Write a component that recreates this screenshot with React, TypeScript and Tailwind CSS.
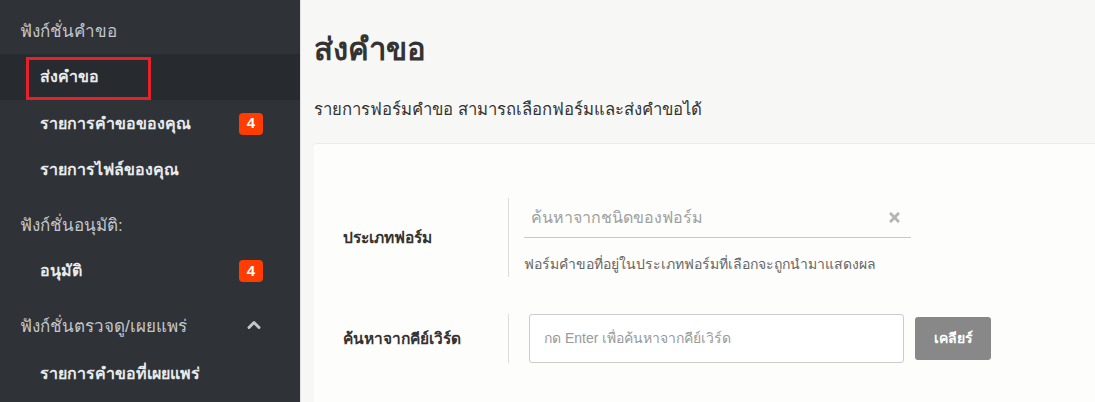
import { ChevronUp } from "lucide-react";
import { FaTimes } from "react-icons/fa";

function Badge({ n }: { n: number }) {
  return (
    <span className="flex h-[22px] w-[24px] items-center justify-center rounded-[4px] bg-[#ff3d00] text-[15px] font-bold text-white">
      {n}
    </span>
  );
}

function SideItem({ label, badge, active, h = "h-[46px]" }: { label: string; badge?: number; active?: boolean; h?: string }) {
  return (
    <div className={`flex ${h} items-center justify-between pl-[40px] pr-[37px] ${active ? "bg-[#272a2f]" : ""}`}>
      <span className="text-[16px] font-bold text-[#e8eaec]">{label}</span>
      {badge ? <Badge n={badge} /> : null}
    </div>
  );
}

function SideHeader({ label, chevron, h, pt }: { label: string; chevron?: boolean; h: string; pt: string }) {
  return (
    <div className={`flex ${h} ${pt} items-start justify-between pl-[20px] pr-[36px]`}>
      <span className="text-[17px] leading-[24px] text-[#c3c7cc]">{label}</span>
      {chevron && <ChevronUp className="h-[20px] w-[20px] text-[#c3c7cc]" strokeWidth={3.5} />}
    </div>
  );
}

export default function App() {
  return (
    <div className="flex h-[402px] w-[1095px] overflow-hidden font-['Liberation_Sans',sans-serif]">
      <aside className="w-[300px] shrink-0 bg-[#2f3338]">
        <SideHeader label="ฟังก์ชั่นคำขอ" h="h-[54px]" pt="pt-[20px]" />
        <div className="relative">
          <SideItem label="ส่งคำขอ" active />
          <div className="pointer-events-none absolute left-[26px] top-[3px] h-[43px] w-[125px] border-[3px] border-[#e8202a]" />
        </div>
        <SideItem label="รายการคำขอของคุณ" badge={4} h="h-[47px]" />
        <SideItem label="รายการไฟล์ของคุณ" />
        <SideHeader label="ฟังก์ชั่นอนุมัติ:" h="h-[55px]" pt="pt-[21px]" />
        <SideItem label="อนุมัติ" badge={4} />
        <SideHeader label="ฟังก์ชั่นตรวจดู/เผยแพร่" chevron h="h-[57px]" pt="pt-[21px]" />
        <SideItem label="รายการคำขอที่เผยแพร่" />
      </aside>

      <main className="flex-1 border-l border-[#e2e2e0] bg-[#f7f7f5] pl-[13px]">
        <h1 className="pt-[30px] text-[31px] font-bold leading-[40px] text-[#333]">ส่งคำขอ</h1>
        <p className="mt-[27px] text-[16.7px] leading-[26px] text-[#333]">
          รายการฟอร์มคำขอ สามารถเลือกฟอร์มและส่งคำขอได้
        </p>
        <section className="mt-[20px] h-[300px] rounded-tl-[3px] border-t border-[#ebebe8] bg-[#fdfdfb] pl-[29px] pt-[54px]">
          <div className="flex">
            <div className="flex w-[166px] items-center border-r border-[#ddd] text-[15.5px] font-bold text-[#333]">
              ประเภทฟอร์ม
            </div>
            <div className="ml-[15px] w-[387px]">
              <div className="flex h-[40px] items-center justify-between border-b border-[#c8c8c8] pl-[7px] pr-[10px]">
                <span className="text-[16px] text-[#a0a0a0]">ค้นหาจากชนิดของฟอร์ม</span>
                <FaTimes className="h-[15px] w-[13px] text-[#b4b4b4]" />
              </div>
              <div className="pb-[3px] pt-[16px] text-[14px] leading-[20px] text-[#666]">
                ฟอร์มคำขอที่อยู่ในประเภทฟอร์มที่เลือกจะถูกนำมาแสดงผล
              </div>
            </div>
          </div>
          <div className="mt-[37px] flex items-center">
            <div className="flex h-[49px] w-[166px] items-center border-r border-[#ddd] text-[15.5px] font-bold text-[#333]">
              ค้นหาจากคีย์เวิร์ด
            </div>
            <div className="ml-[20px] flex h-[49px] w-[375px] items-center rounded-[3px] border border-[#ccc] bg-white pl-[14px] text-[14px] text-[#999]">
              กด Enter เพื่อค้นหาจากคีย์เวิร์ด
            </div>
            <button className="ml-[11px] h-[43px] w-[76px] rounded-[3px] bg-[#888] text-[14px] font-bold text-white">
              เคลียร์
            </button>
          </div>
        </section>
      </main>
    </div>
  );
}
